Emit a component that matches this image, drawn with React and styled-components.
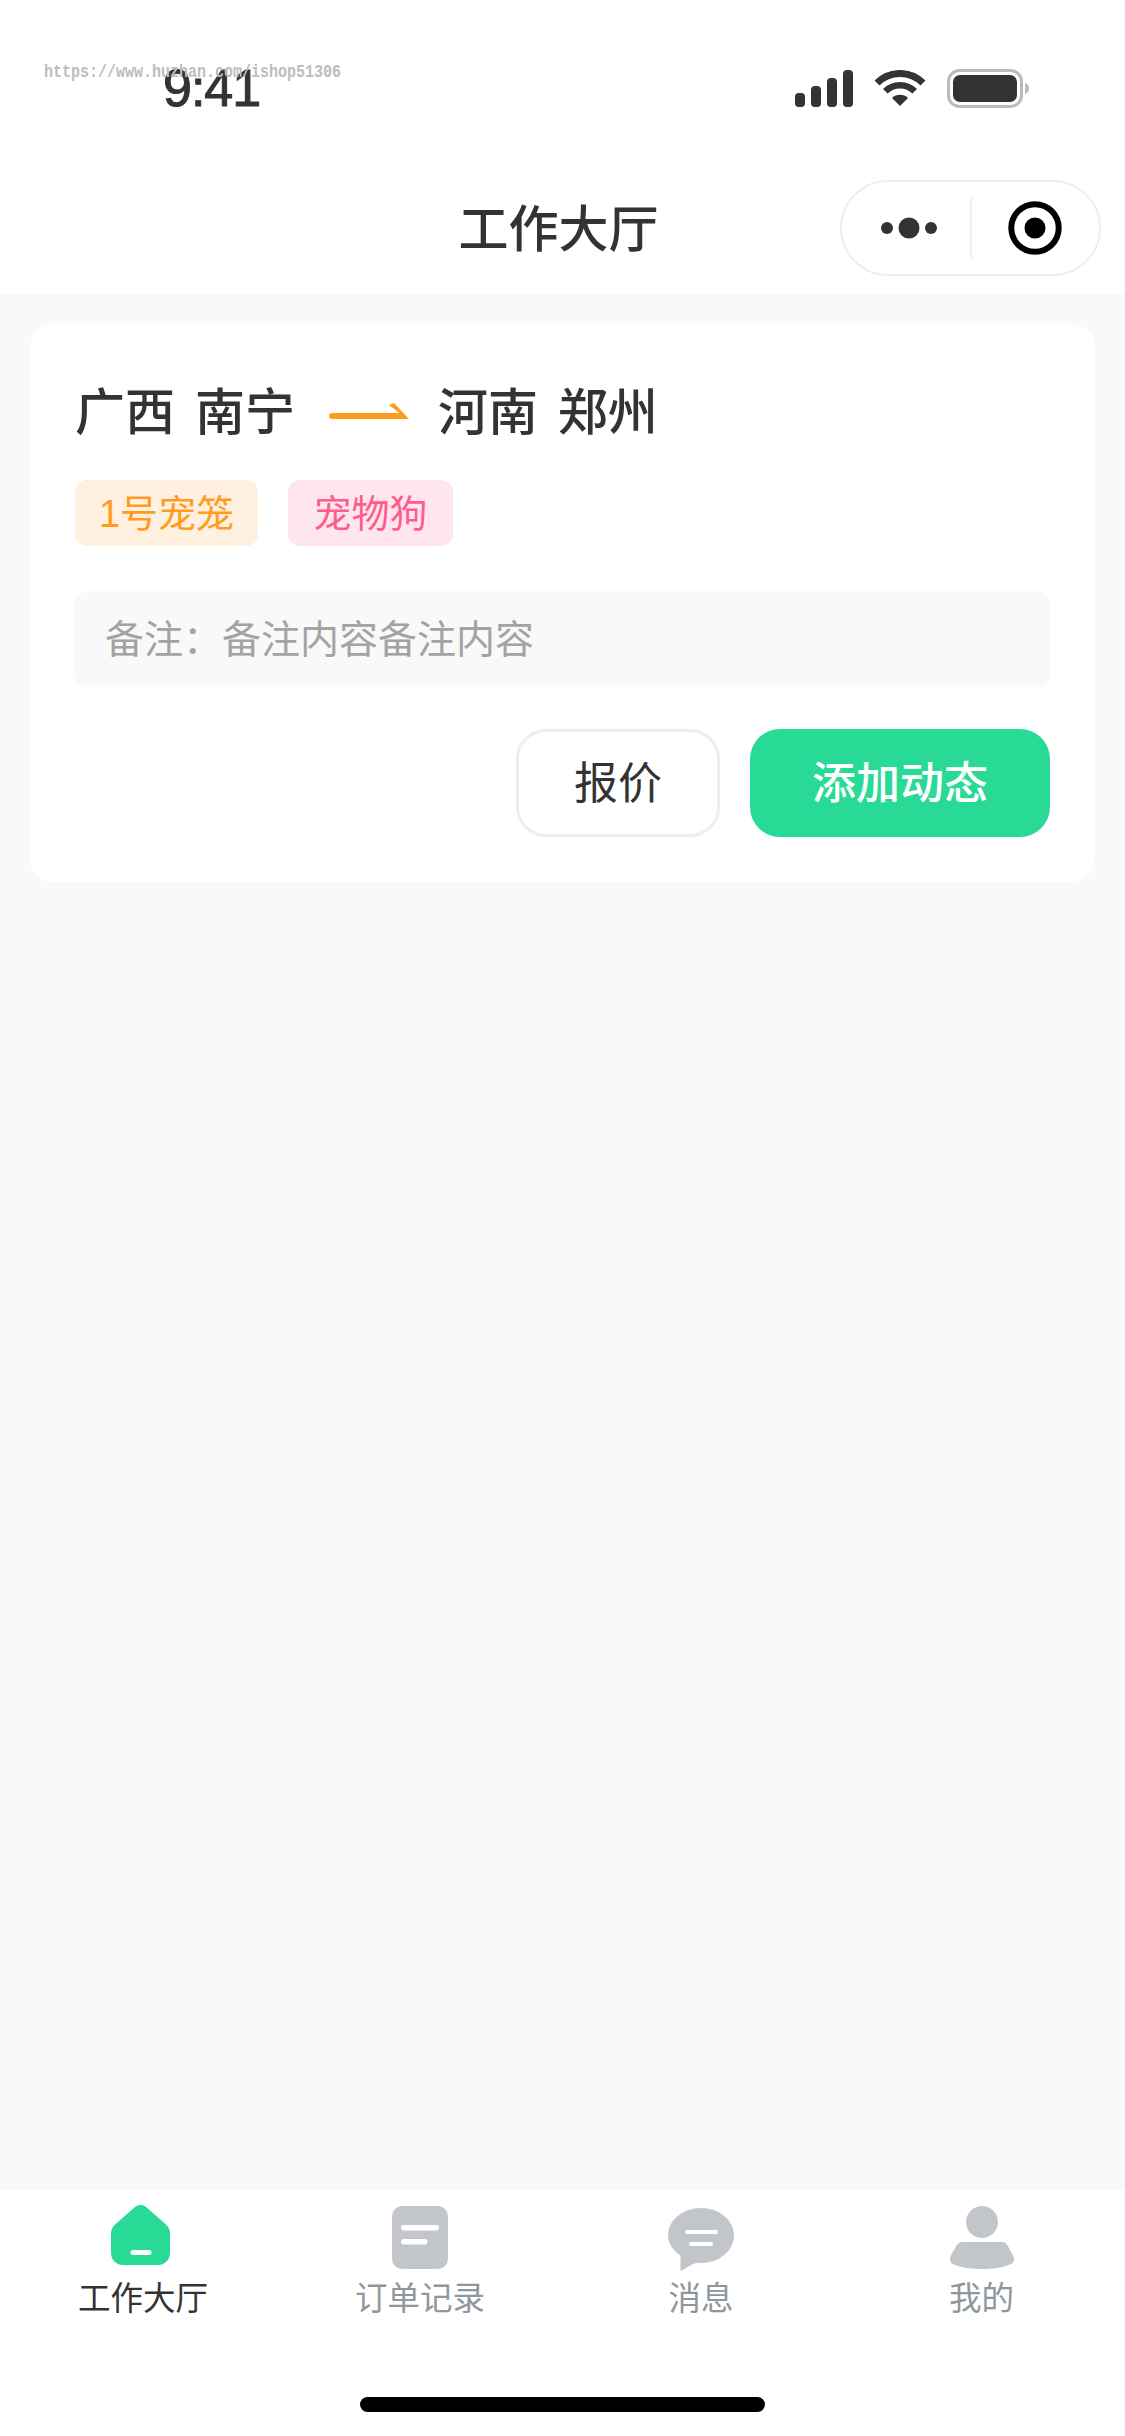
import styled, { createGlobalStyle } from "styled-components";

const GlobalStyle = createGlobalStyle`
  * {
    box-sizing: border-box;
  }
  html, body {
    margin: 0;
    padding: 0;
    background: #fff;
  }
  body {
    font-family: "Liberation Sans", "Noto Sans CJK SC", sans-serif;
    color: #333;
  }
`;

const tabs = [
  { label: "工作大厅", active: true, Icon: HomeIcon },
  { label: "订单记录", Icon: OrderIcon },
  { label: "消息", Icon: MessageIcon },
  { label: "我的", Icon: UserIcon },
];

export default function App() {
  return (
    <>
      <GlobalStyle />
      <Page>
        <Watermark>https://www.huzhan.com/ishop51306</Watermark>
        <StatusBar>
          <Time>9:41</Time>
          <StatusIcons>
            <svg width="58" height="37" viewBox="0 0 58 37" fill="#333">
              <rect x="0" y="23" width="10" height="14" rx="4" />
              <rect x="16" y="16" width="10" height="21" rx="4" />
              <rect x="32" y="8" width="10" height="29" rx="4" />
              <rect x="48" y="0" width="10" height="37" rx="4" />
            </svg>
            <svg width="52" height="36" viewBox="0 0 52 36" fill="none" stroke="#333">
              <path d="M3 13A32.5 32.5 0 0 1 49 13" strokeWidth="7" />
              <path d="M11.3 21.3A20.8 20.8 0 0 1 40.7 21.3" strokeWidth="6.5" />
              <path d="M26 36L18 28A11.3 11.3 0 0 1 34 28Z" fill="#333" stroke="none" />
            </svg>
            <svg width="82" height="39" viewBox="0 0 82 39">
              <rect x="1.5" y="1.5" width="73" height="36" rx="11" fill="none" stroke="#bbb" strokeWidth="3" />
              <rect x="6" y="6" width="64" height="27" rx="7" fill="#333" />
              <path d="M78 14c2.500 .5 4 2.500 4 5.500s-1.500 5-4 5.500Z" fill="#bbb" />
            </svg>
          </StatusIcons>
        </StatusBar>
        <NavBar>
          <span />
          <NavTitle>工作大厅</NavTitle>
          <Capsule>
            <CapsuleSide>
              <DotsIcon width="56" height="22" viewBox="0 0 56 22" fill="#333">
                <circle cx="6" cy="11" r="6" />
                <circle cx="28" cy="11" r="10.500" />
                <circle cx="50" cy="11" r="6" />
              </DotsIcon>
            </CapsuleSide>
            <CapsuleDivider />
            <CapsuleSide>
              <svg width="54" height="54" viewBox="0 0 54 54">
                <circle cx="27" cy="27" r="23.700" fill="none" stroke="#000" strokeWidth="6" />
                <circle cx="27" cy="27" r="10.500" fill="#000" />
              </svg>
            </CapsuleSide>
          </Capsule>
        </NavBar>
        <Main>
          <Card>
            <Route>
              <span>广西 南宁</span>
              <svg width="80" height="16" viewBox="0 0 80 16">
                <path d="M3 10H70.500L60 2L65 0L80 16H3A3 3 0 0 1 3 10Z" fill="#ff9c1f" />
              </svg>
              <span>河南 郑州</span>
            </Route>
            <TagRow>
              <Tag $width={183} $color="#ff9c1f" $bg="#fff0df">1号宠笼</Tag>
              <Tag $width={165} $color="#ff5c8d" $bg="#ffe6ee">宠物狗</Tag>
            </TagRow>
            <Note>备注：备注内容备注内容</Note>
            <Actions>
              <QuoteButton>报价</QuoteButton>
              <PrimaryButton>添加动态</PrimaryButton>
            </Actions>
          </Card>
        </Main>
        <TabBar>
          <TabRow>
            {tabs.map(({ label, active, Icon }) => (
              <Tab key={label}>
                <TabIconSlot>
                  <Icon />
                </TabIconSlot>
                <TabLabel $active={active}>{label}</TabLabel>
              </Tab>
            ))}
          </TabRow>
          <HomeIndicator />
        </TabBar>
      </Page>
    </>
  );
}

function HomeIcon() {
  return (
    <svg width="59" height="60" viewBox="0 0 59 60">
      <path
        d="M24 2a8.500 8.500 0 0 1 11 0L55 19.500a12 12 0 0 1 4 9V48a12 12 0 0 1-12 12H12A12 12 0 0 1 0 48V28.500a12 12 0 0 1 4-9Z"
        fill="#28da95"
      />
      <rect x="19.500" y="45" width="21" height="5" rx="2.500" fill="#fff" />
    </svg>
  );
}

function OrderIcon() {
  return (
    <svg width="56" height="64" viewBox="0 -1 56 64">
      <rect width="56" height="63" rx="10" fill="#c2c6ca" />
      <rect x="9" y="19" width="38" height="5.500" rx="2.750" fill="#fff" />
      <rect x="9" y="33" width="26.500" height="5.500" rx="2.750" fill="#fff" />
    </svg>
  );
}

function MessageIcon() {
  return (
    <svg width="66" height="66" viewBox="0 -3 66 66">
      <path
        d="M33 0C51 0 66 12 66 27.500S51 55 33 55C31 55 28 55 26 55.500L12.500 63V47.500C5 42.500 0 35.500 0 27.500C0 12 15 0 33 0Z"
        fill="#c2c6ca"
      />
      <rect x="17" y="22" width="33" height="4" rx="2" fill="#fff" />
      <rect x="21" y="34" width="24" height="4" rx="2" fill="#fff" />
    </svg>
  );
}

function UserIcon() {
  return (
    <svg width="64" height="64" viewBox="0 -1 64 64" fill="#c2c6ca">
      <ellipse cx="32" cy="16" rx="16" ry="16" />
      <path d="M13 36H51C55 36 57 38 59 42C61 46 64 50 64 53C64 56 63 57 61 58C53 62 42 63 32 63S11 62 3 58C1 57 0 56 0 53C0 50 3 46 5 42C7 38 9 36 13 36Z" />
    </svg>
  );
}

const Page = styled.div`
  position: relative;
  display: flex;
  flex-direction: column;
  width: 1125px;
  height: 2436px;
  overflow: hidden;
  background: #f9f9f9;
`;

const Watermark = styled.div`
  position: absolute;
  top: 62px;
  left: 44px;
  font-family: "Liberation Mono", monospace;
  font-size: 15px;
  font-weight: 700;
  line-height: 18px;
  color: #bdbdbd;
  transform: scaleY(1.25);
  transform-origin: left top;
`;

const StatusBar = styled.div`
  display: flex;
  justify-content: space-between;
  align-items: center;
  height: 162px;
  padding: 14px 96px 0 163px;
  background: #fff;
`;

const Time = styled.div`
  font-size: 52px;
  letter-spacing: -1px;
  color: #333;
  line-height: 60px;
  -webkit-text-stroke: 1px #333;
`;

const StatusIcons = styled.div`
  display: flex;
  align-items: center;
  gap: 21px;
`;

const NavBar = styled.div`
  display: grid;
  grid-template-columns: 1fr auto 1fr;
  align-items: center;
  height: 132px;
  padding: 0 24px 0 16px;
  background: #fff;
`;

const NavTitle = styled.div`
  padding-bottom: 6px;
  font-size: 50px;
  font-weight: 500;
  color: #333;
`;

const Capsule = styled.div`
  justify-self: end;
  display: flex;
  align-items: center;
  width: 261px;
  height: 96px;
  border: 2px solid #eee;
  border-radius: 48px;
  background: #fff;
`;

const CapsuleSide = styled.div`
  flex: 1;
  display: flex;
  justify-content: center;
  align-items: center;
`;

const DotsIcon = styled.svg`
  margin-left: 6px;
`;

const CapsuleDivider = styled.div`
  width: 2px;
  height: 60px;
  background: #eee;
`;

const Main = styled.div`
  flex: 1;
  padding: 30px;
  background: #f9f9f9;
`;

const Card = styled.div`
  padding: 45px;
  border-radius: 24px;
  background: #fff;
`;

const Route = styled.div`
  display: flex;
  align-items: center;
  gap: 34px;
  height: 78px;
  font-size: 50px;
  font-weight: 500;
  word-spacing: 6px;
  color: #333;
  svg {
    margin: 6px -5px 0 0;
  }
`;

const TagRow = styled.div`
  display: flex;
  gap: 30px;
  margin-top: 33px;
`;

const Tag = styled.div`
  width: ${(props) => props.$width}px;
  height: 66px;
  border-radius: 12px;
  font-size: 38px;
  line-height: 68px;
  text-align: center;
  color: ${(props) => props.$color};
  background: ${(props) => props.$bg};
`;

const Note = styled.div`
  height: 96px;
  margin-top: 45px;
  padding: 0 30px;
  border-radius: 12px;
  font-size: 39px;
  line-height: 98px;
  color: #a3a3a3;
  background: #f9f9f9;
`;

const Actions = styled.div`
  display: flex;
  justify-content: flex-end;
  gap: 30px;
  margin-top: 42px;
`;

const QuoteButton = styled.div`
  width: 204px;
  height: 108px;
  border: 3px solid #eee;
  border-radius: 30px;
  font-size: 44px;
  line-height: 104px;
  text-align: center;
  color: #333;
  background: #fff;
`;

const PrimaryButton = styled.div`
  width: 300px;
  height: 108px;
  border-radius: 30px;
  font-size: 44px;
  font-weight: 500;
  line-height: 110px;
  text-align: center;
  color: #fff;
  background: #28da95;
`;

const TabBar = styled.div`
  display: flex;
  flex-direction: column;
  align-items: center;
  height: 246px;
  padding-top: 15px;
  background: #fff;
`;

const TabRow = styled.div`
  display: grid;
  grid-template-columns: 279px 280px 282px 279px;
  width: 100%;
  padding-left: 1px;
`;

const Tab = styled.div`
  display: flex;
  flex-direction: column;
  align-items: center;
`;

const TabIconSlot = styled.div`
  display: flex;
  align-items: flex-start;
  justify-content: center;
  height: 72px;
`;

const TabLabel = styled.div`
  font-size: 32.500px;
  line-height: 44px;
  margin-left: ${(props) => (props.$active ? "5px" : "0")};
  color: ${(props) => (props.$active ? "#333" : "#8f979e")};
`;

const HomeIndicator = styled.div`
  width: 405px;
  height: 15px;
  margin-top: 76px;
  border-radius: 8px;
  background: #000;
`;
